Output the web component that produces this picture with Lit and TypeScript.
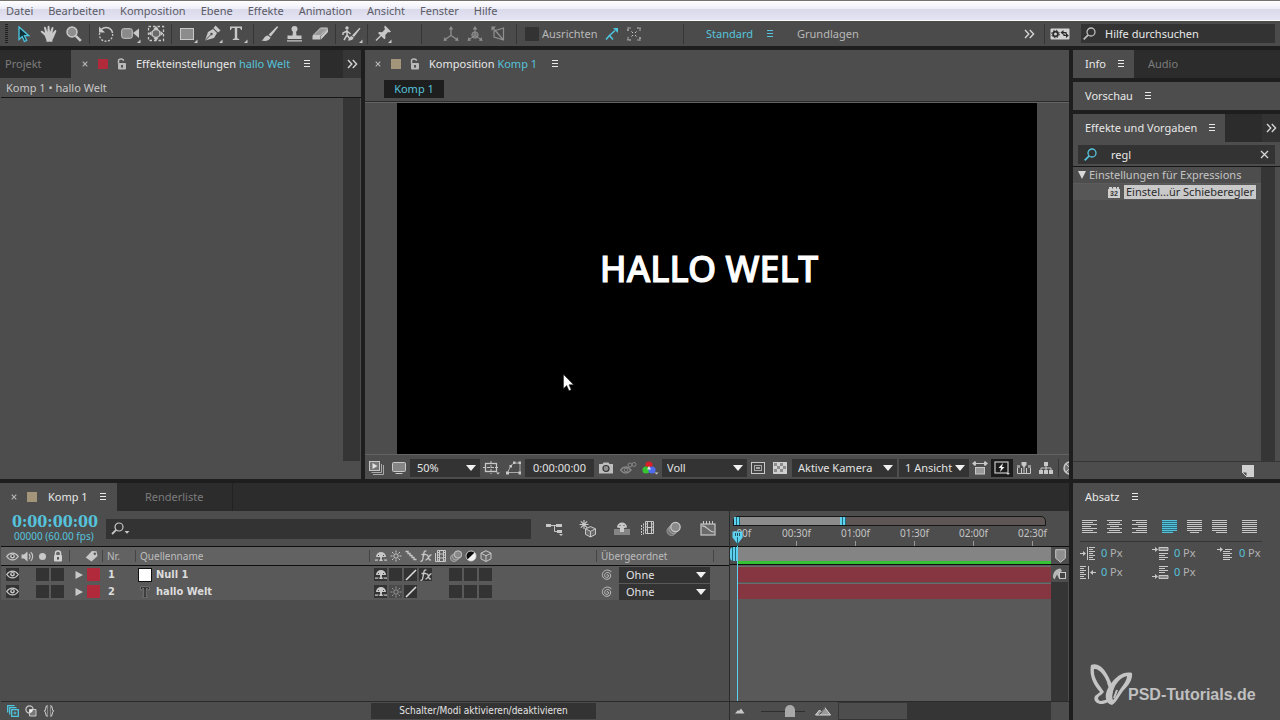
import { LitElement, html, svg, css, TemplateResult, SVGTemplateResult } from "lit";
import { customElement } from "lit/decorators.js";
import { classMap } from "lit/directives/class-map.js";

const G = "#c8c8c8";

const alignLines = (widths: number[], anchor: "l" | "c" | "r"): SVGTemplateResult =>
  svg`${widths.map((w, i) => {
    const x = anchor === "l" ? 0 : anchor === "r" ? 15 - w : (15 - w) / 2;
    return svg`<rect x=${x} y=${i * 2} width=${w} height="1" fill="currentColor"/>`;
  })}`;

const rag = [15, 11, 15, 9, 15, 11, 15];

const mushroom = svg`<path d="M1 6a5 5 0 0 1 10 0z" fill="${G}"/><path d="M5 6h2v4h-2zM0 8.500h12v1.200h-12z" fill="${G}"/><path d="M3 10l2-3M9 10l-2-3M3.500 5v-1M8.500 5v-1" stroke="#3a3a3a" stroke-width=".9" fill="none"/>`;
const film = svg`<path d="M2.500.500h8v11h-8z" fill="none" stroke="${G}"/><path d="M4.500.500v11M8.500.500v11M4.500 4h4M4.500 8h4M2 2.500h2M2 5h2M2 7.500h2M2 10h2M9 2.500h2M9 5h2M9 7.500h2M9 10h2" stroke="${G}" fill="none"/><path d="M.500 3v8.500h2" stroke="${G}" fill="none"/>`;
const blur = svg`<circle cx="4" cy="8" r="3.500" fill="#777" stroke="#aaa"/><circle cx="6" cy="6.500" r="3.500" fill="#777" stroke="#aaa"/><circle cx="8" cy="4.500" r="3.700" fill="#888" stroke="${G}"/>`;
const cube = svg`<path d="M6 .700l5 2.400v5.800l-5 2.600-5-2.600v-5.800zM1 3.200l5 2.500 5-2.500M6 5.700v5.800" fill="#6a6a6a" stroke="${G}" stroke-linejoin="round"/>`;
const sun = svg`<circle cx="6" cy="6" r="2.200" fill="none" stroke="currentColor"/><path d="M6 .500v2M6 9.500v2M.500 6h2M9.500 6h2M2 2l1.500 1.500M8.500 8.500l1.500 1.500M10 2l-1.500 1.500M3.500 8.500l-1.500 1.500" stroke="currentColor" fill="none"/>`;

const ICONS: Record<string, [number, number, SVGTemplateResult]> = {
  arrow: [14, 18, svg`<path d="M2 2v12.500l3.200-3 2.200 5 2.300-1-2.200-4.800h4.300z" fill="#12313a" stroke="#4fc6df" stroke-width="1.300"/>`],
  hand: [18, 18, svg`<path d="M4.600 10.500L1 7.300c-.9-1 .4-2.200 1.500-1.400l2.600 1.800L4 3c-.2-1.300 1.500-1.600 1.900-.5L7.400 7 7.600 1.700c0-1.300 1.800-1.300 1.900 0L10 7l1.600-4.300c.5-1.200 2.100-.7 1.800.6L12.400 8l2.200-2.500c.9-1 2.200 0 1.600 1.200-1 2-2.200 6-3.800 8.300v1.800H6.400V15z" fill="${G}"/>`],
  zoom: [18, 18, svg`<circle cx="7" cy="7" r="5" fill="#8e8e8e" stroke="${G}" stroke-width="1.500"/><path d="M10.800 10.800l5 5" stroke="${G}" stroke-width="2.600"/>`],
  rotate: [18, 18, svg`<path d="M4.500 4.200A6.600 6.600 0 0 1 15.500 8" fill="none" stroke="${G}" stroke-width="1.500"/><path d="M15.600 9A6.600 6.600 0 1 1 3 7" fill="none" stroke="${G}" stroke-width="1.300" stroke-dasharray="2 1.500"/><path d="M2 1.500v6h6z" fill="${G}"/>`],
  camera: [20, 18, svg`<rect x=".700" y="3.700" width="10.600" height="9.600" rx="2" fill="#8a8a8a" stroke="${G}"/><path d="M12 8l6-4.500v9.500z" fill="${G}"/><path d="M16 18h3.500v-3.500z" fill="${G}"/>`],
  anchor: [18, 18, svg`<rect x="1.500" y="1.500" width="15" height="14" fill="none" stroke="${G}" stroke-width="1.300" stroke-dasharray="2.500 2"/><circle cx="9" cy="8.500" r="4" fill="#6a6a6a" stroke="${G}" stroke-width="1.400"/><path d="M9 1l2.500 3h-5zM9 16l2.500-3h-5zM1.500 8.500l3-2.500v5zM16.500 8.500l-3-2.500v5z" fill="${G}"/>`],
  rect: [20, 18, svg`<rect x="2.500" y="3.500" width="13" height="11" fill="#8c8c8c" stroke="${G}"/><path d="M16 18h3.500v-3.500z" fill="${G}"/>`],
  pen: [20, 18, svg`<path d="M2 15.500L5 7l5-3 4 4-3 5z" fill="${G}"/><path d="M10.500 3l2-2.500 5 5L15 7.500z" fill="${G}"/><path d="M2 15.500l6-6" stroke="#4d4d4d" fill="none"/><circle cx="8.500" cy="9" r="1.200" fill="#4d4d4d"/><path d="M16 18h3.500v-3.500z" fill="${G}"/>`],
  type: [20, 18, svg`<path d="M2 1.500h12v3.500h-1c-.3-1.500-.8-2-2-2H9.200v9.500c0 1 .4 1.300 2 1.500v1H4.800v-1c1.600-.2 2-.5 2-1.500V3H5c-1.200 0-1.700.5-2 2H2z" fill="${G}"/><path d="M16 18h3.500v-3.500z" fill="${G}"/>`],
  brush: [18, 18, svg`<path d="M17.300 2L9.800 11.500 7.600 9.700 16 1.300z" fill="${G}"/><path d="M7 10.500l2.500 2c-.8 3-4.500 4-9 3 2.500-.8 2.500-4.600 6.500-5z" fill="${G}"/>`],
  stamp: [18, 18, svg`<circle cx="8.500" cy="4" r="3" fill="${G}"/><path d="M7 6h3l.500 4.500h5v3.500H1.500v-3.500h5zM1 15.200h15v1.300H1z" fill="${G}"/>`],
  eraser: [18, 18, svg`<path d="M2 10.500L9.500 3h7L9.500 10.500z" fill="#999" stroke="${G}"/><path d="M1.500 11H9.500v3.500h-8zM10 11l7-7.500V7l-7 7.500z" fill="${G}"/>`],
  roto: [22, 18, svg`<circle cx="6" cy="3" r="1.700" fill="${G}"/><path d="M6 5v5M6 6l-4 2v2M6 6l3.500 3M6 10l-3 5M6 10l3 4" stroke="${G}" stroke-width="1.500" fill="none"/><path d="M19.500 3.500L13 12l-2-1.600 7.500-7.600zM10.500 11l2.200 1.700c-.8 2.400-3 3.200-6.200 2.600 2-.8 2-3.700 4-4.300z" fill="${G}"/><path d="M18 18h3.500v-3.500z" fill="${G}"/>`],
  pin: [20, 18, svg`<path d="M11 .500l6 6-1.700 1-1.200-.4-2.800 2.900.200 3.200-1.200 1L4 8l1.200-1 3 .2L11 4.200l-.8-2.200z" fill="${G}"/><path d="M7 10.500L2 15.500" stroke="${G}" stroke-width="1.500"/><path d="M14 18h3.500v-3.500z" fill="${G}"/>`],
  axisLocal: [16, 16, svg`<path d="M8 2v7.500L2 13.500M8 9.500l6 4" stroke="#909090" stroke-width="1.300" fill="none"/><path d="M8 0l2.300 3.500H5.700zM.5 15l1-4 2.700 3.500zM15.500 15l-1-4-2.700 3.500z" fill="#909090"/>`],
  axisWorld: [16, 16, svg`<circle cx="8" cy="9" r="3.200" fill="#707070" stroke="#909090"/><path d="M8 2v7.500L2 13.500M8 9.500l6 4" stroke="#909090" fill="none"/><path d="M8 0l2.300 3.500H5.700zM.5 15l1-4 2.700 3.500zM15.500 15l-1-4-2.700 3.500z" fill="#909090"/>`],
  axisView: [16, 16, svg`<path d="M3 5l9.500-3v12L3 11zM2 2l10.500 12" stroke="#909090" stroke-width="1.200" fill="none"/><path d="M.5.500h4.500L.5 5z" fill="#909090"/>`],
  snap: [14, 14, svg`<path d="M1 12.500l3.500-4L8 12.500M4.500 8.500L10 3.500" stroke="#4fc6df" stroke-width="1.500" fill="none"/><path d="M8 1h5v5z" fill="#4fc6df"/>`],
  bounds: [14, 14, svg`<path d="M1 4V1h3M10 1h3v3M13 10v3h-3M4 13H1v-3" stroke="${G}" stroke-width="1.200" fill="none" stroke-dasharray="2 .600"/><path d="M4.500 4.500l1.500 1.500M9.500 4.500L8 6M4.500 9.500L6 8M9.500 9.500L8 8" stroke="${G}" fill="none"/>`],
  chevrons: [11, 10, svg`<path d="M1 1l3.800 4L1 9M5.800 1l3.800 4-3.800 4" stroke="#d4d4d4" stroke-width="1.400" fill="none"/>`],
  sync: [20, 12, svg`<rect x=".500" y=".500" width="19" height="11" rx="1" fill="#d2d2d2"/><circle cx="5.500" cy="6" r="2.400" fill="none" stroke="#2b2b2b" stroke-width="1.800"/><circle cx="5.500" cy="6" r="3.800" fill="none" stroke="#2b2b2b" stroke-width="1" stroke-dasharray="1.500 1.500"/><path d="M13 4.500h3v2M17 7.500h-3v-2" stroke="#2b2b2b" stroke-width="1.200" fill="none"/><path d="M13.500 2v5L10.500 4.500zM16 5v5l2.800-2.500z" fill="#2b2b2b"/>`],
  search: [13, 13, svg`<circle cx="8" cy="5" r="4" fill="none" stroke="currentColor" stroke-width="1.300"/><path d="M5.200 7.800L.700 12.300" stroke="currentColor" stroke-width="1.700"/>`],
  searchMenu: [19, 14, svg`<circle cx="8" cy="5" r="4" fill="none" stroke="${G}" stroke-width="1.200"/><path d="M5.200 7.800L1 12" stroke="${G}" stroke-width="1.800"/><path d="M13.500 9h5l-2.500 2.700z" fill="${G}"/>`],
  burger: [8, 8, svg`<path d="M1 .500h6M1 3.500h6M1 6.500h6" stroke="currentColor"/>`],
  close: [6, 6, svg`<path d="M.700.700l4.600 4.600M5.300.700L.700 5.300" stroke="#b8b8b8" stroke-width="1.100"/>`],
  clear: [9, 9, svg`<path d="M1 1l7 7M8 1L1 8" stroke="#d8d8d8" stroke-width="1.300"/>`],
  lock: [10, 12, svg`<path d="M1.500 5.500V2.800c0-2.500 5-2.500 5 0" fill="none" stroke="#b9b9b9" stroke-width="1.500"/><rect x="1" y="5" width="8" height="6.500" rx="1" fill="#b9b9b9"/><rect x="4.200" y="7" width="1.600" height="2.600" fill="#3a3a3a"/>`],
  lockClosed: [10, 12, svg`<path d="M2.500 6V3c0-2.800 5-2.800 5 0v3" fill="none" stroke="#d0d0d0" stroke-width="1.500"/><rect x="1" y="5" width="8" height="6.500" rx="1" fill="#d0d0d0"/><rect x="4.200" y="7" width="1.600" height="2.600" fill="#3a3a3a"/>`],
  preview: [16, 14, svg`<path d="M4 13.500h10.500V4M2.500 11.500h10V3" fill="none" stroke="#aaa"/><rect x=".500" y=".500" width="10" height="9" fill="#777" stroke="${G}"/><path d="M3.500 2v6l5-3z" fill="#e2e2e2"/>`],
  monitor: [16, 14, svg`<rect x="1.500" y="1.500" width="13" height="9" rx="1" fill="#858585" stroke="${G}"/><path d="M4.500 12.500h7" stroke="${G}"/>`],
  guides: [18, 14, svg`<rect x="2.500" y="2.500" width="11" height="8" fill="none" stroke="${G}" stroke-width="1.300"/><path d="M8 0v13M0 6.500h16" stroke="${G}" stroke-dasharray="3 1"/><path d="M13 11.500h4l-2 2z" fill="${G}"/>`],
  mask: [16, 14, svg`<path d="M1.500 11.500L5 4.500l3-2.500h6v9.500z" fill="none" stroke="#aaa"/><path d="M0 10.500h3v3H0zM3.500 4h2.500v2.500H3.500zM7 .500h2.500V3H7zM12.500.500H15V3h-2.500zM12.500 10.500H15v3h-2.500z" fill="${G}"/>`],
  snapshot: [16, 12, svg`<path d="M1 2h3.500l1-1.500h5l1 1.500H15v9.500H1z" fill="#bdbdbd"/><circle cx="8" cy="6.500" r="3" fill="#8f8f8f" stroke="#333" stroke-width="1.200"/>`],
  showSnap: [17, 14, svg`<path d="M.5 9c3-4 7.500-4 10.500 0-3 4-7.500 4-10.500 0z" fill="none" stroke="#888" stroke-width="1.400"/><circle cx="6" cy="9" r="1.800" fill="none" stroke="#888"/><circle cx="10" cy="4" r="2" fill="none" stroke="#888"/><circle cx="14" cy="3.500" r="2" fill="none" stroke="#888"/>`],
  rgb: [17, 14, svg`<circle cx="7" cy="4" r="3.600" fill="#d8202a"/><circle cx="4" cy="9" r="3.600" fill="#36c531"/><circle cx="10" cy="9" r="3.600" fill="#4f6cf0"/><path d="M7 5l2 3.500H5z" fill="#e8e8e8"/><path d="M12.500 11.500h4l-2 2z" fill="${G}"/>`],
  roi: [14, 12, svg`<rect x=".500" y=".500" width="13" height="11" fill="#454545" stroke="${G}"/><rect x="3.500" y="3.500" width="7" height="5" fill="none" stroke="#a8a8a8"/><rect x="5" y="5" width="4" height="2" fill="#a8a8a8"/>`],
  checker: [14, 12, svg`<rect width="14" height="12" fill="#d0d0d0"/><path d="M1 1h3v3H1zM7 1h3v3H7zM4 4h3v3H4zM10 4h3v3h-3zM1 7h3v3H1zM7 7h3v3H7z" fill="#8c8c8c"/>`],
  aspect: [16, 14, svg`<path d="M2 2.500h12M3.500.500v4M12.500.500v4" stroke="${G}"/><path d="M0 2.500L3 0v5zM16 2.500L13 0v5z" fill="${G}"/><rect x="3.500" y="6.500" width="9" height="6.500" fill="#999" stroke="${G}"/>`],
  fast: [16, 14, svg`<rect x="1" y="1" width="13" height="11" fill="none" stroke="${G}" stroke-width="1.200"/><path d="M9 2L4.500 7H7L6 11l4.500-5H8z" fill="#f0f0f0"/><path d="M12 12h4l-2 2z" fill="${G}"/>`],
  tline: [16, 14, svg`<path d="M1.500 4v8.500h13V4M5.500 7v5M10.500 7v5M8 4v8.500" fill="none" stroke="${G}"/><path d="M5.500 1h5v3L8 6.500 5.500 4z" fill="${G}"/><path d="M1 4h3v3H1zM12 4h3v3h-3z" fill="#999"/>`],
  flow: [14, 12, svg`<path d="M5 0h4v4H5zM0 8h4v4H0zM5 8h4v4H5zM10 8h4v4h-4z" fill="${G}"/><path d="M7 4v4M2 8V6h10v2" stroke="${G}" fill="none"/>`],
  globe: [14, 14, svg`<circle cx="7" cy="7" r="6" fill="#777" stroke="${G}" stroke-width="1.500"/><path d="M7 7L3 3M7 7h6M7 7l-4 4" stroke="${G}"/>`],
  eye: [13, 9, svg`<path d="M.700 4.500c3-4.500 8.600-4.500 11.600 0-3 4.500-8.600 4.500-11.600 0z" fill="none" stroke="${G}" stroke-width="1.200"/><circle cx="6.500" cy="4.300" r="2.300" fill="${G}"/><circle cx="6.500" cy="4" r="1" fill="#333"/>`],
  speaker: [13, 11, svg`<path d="M.5 3.500h2.500l3.500-3v10L3 7.500H.500z" fill="${G}"/><path d="M8 3c1.300 1.200 1.300 3.800 0 5M9.800 1.300c2.400 2 2.400 6.400 0 8.400" stroke="${G}" fill="none" stroke-width="1.200"/>`],
  solo: [13, 9, svg`<circle cx="6.500" cy="4.500" r="3.500" fill="${G}"/>`],
  tag: [13, 12, svg`<path d="M.700 7.500L7 1l4.500.200L12.500 6 6.500 11.500z" fill="${G}"/><circle cx="9.800" cy="3.700" r="1.200" fill="#555"/>`],
  twirl: [8, 10, svg`<path d="M.5 1v8L8 5z" fill="${G}"/>`],
  mushroom: [12, 11, mushroom],
  sun: [12, 12, sun],
  quality: [12, 12, svg`<path d="M.5 1.500h2.500v2h2v2h2v2h2v2h2.500" stroke="${G}" stroke-width="1.300" fill="none"/>`],
  slash: [12, 12, svg`<path d="M1 11L11 1" stroke="#dcdcdc" stroke-width="1.600"/>`],
  fx: [12, 12, svg`<path d="M6.500 1.200C4.800.300 4.200 1.500 3.900 3L2.700 9.500c-.3 1.500-1 2-2.200 1.600M1.500 4.500h4.500M6 5c1.500-.600 2 .500 2.500 2.500s1 3 2.500 2.200M11.500 4.700C9 5 8 10 5.500 10" stroke="${G}" stroke-width="1.300" fill="none"/>`],
  film: [12, 12, film],
  blur: [12, 12, blur],
  adjust: [12, 12, svg`<circle cx="6" cy="6" r="5" fill="#f2f2f2"/><path d="M2.400 9.600A5 5 0 0 1 9.600 2.400z" fill="#0c0c0c"/><circle cx="6" cy="6" r="5" fill="none" stroke="#ddd" stroke-width=".800"/>`],
  cube: [12, 12, cube],
  whip: [12, 12, svg`<path d="M6 6.500c-.5-.9.800-1.500 1.400-.4.700 1.800-1.300 3-2.900 2C2.800 6.800 3.800 3.700 6.300 3.500 9.300 3.300 10.500 6.500 9 8.800 6.800 11.600 2 10.300 1.400 6.600 1 3.300 3.600 1 6.600 1.100c1.700.1 3.100.9 3.900 2" fill="none" stroke="#c4c4c4"/>`],
  textLayer: [12, 12, svg`<path d="M1.500 1h9v3h-1c-.2-1-.5-1.500-1.500-1.500H7V10l1.500.500v.700h-5v-.700L5 10V2.500H4C3 2.500 2.700 3 2.500 4h-1z" fill="#1f1f1f" stroke="#a0a0a0" stroke-width=".500"/>`],
  miniFlow: [17, 14, svg`<path d="M0 2h5v3H0zM10 2h6v3h-6zM11 8h5v3h-5z" fill="${G}"/><path d="M5 3.500h5M8.500 3.500v6h3" stroke="${G}" fill="none"/><path d="M13 12h4l-2 2z" fill="${G}"/>`],
  draft3d: [18, 18, svg`<path d="M5 0v9M.5 4.500h9M1.800 1.300l6.400 6.400M8.200 1.300L1.800 7.700" stroke="${G}" stroke-width="1.200"/><path d="M11.500 6.500l5 2.300v5.600l-5 2.600-5-2.600V8.800zM6.500 8.800l5 2.500 5-2.500M11.500 11.300V17" fill="#6a6a6a" stroke="${G}"/>`],
  shy: [16, 15, svg`<path d="M0 8h16v6H0z" fill="#858585"/><path d="M3 6.500a5 5 0 0 1 10 0l-3 .500v4H6V7z" fill="${G}"/><path d="M6 5v-1M10 5v-1" stroke="#444"/>`],
  frames: [16, 16, svg`<path d="M5.500.500h8v12h-8z" fill="none" stroke="${G}"/><path d="M7.500.500v12M11.500.500v12M7.500 6.500h4M5 3h2M5 6h2M5 9h2M12 3h2M12 6h2M12 9h2" stroke="${G}"/><path d="M1.500 4v10M3.500 2.500v11.500" stroke="${G}" stroke-dasharray="2 1"/>`],
  motion: [16, 16, svg`<circle cx="5.500" cy="10" r="4.500" fill="#707070" stroke="#999"/><circle cx="7.500" cy="8" r="4.500" fill="#777" stroke="#aaa"/><circle cx="9.500" cy="6" r="4.700" fill="#8a8a8a" stroke="${G}" stroke-width="1.200"/>`],
  graph: [16, 15, svg`<rect x="1" y="3" width="14" height="11" fill="#6a6a6a" stroke="${G}" stroke-width="1.200"/><path d="M2 5c5-1 6 6 12 6" stroke="${G}" fill="none" stroke-width="1.200"/><path d="M3.500 0v3M6.500 0v3M9.500 0v3M12.500 0v3" stroke="${G}"/>`],
  toggleA: [12, 12, svg`<path d="M.700 7.500V.700h6.800M2.700 9.500V2.700h6.800M4.700 4.700h6.600v6.600H4.700z" fill="none" stroke="#4fc6df" stroke-width="1.300"/><path d="M6.500 8h3M8 6.500v3" stroke="#4fc6df"/>`],
  toggleB: [12, 12, svg`<circle cx="4.500" cy="4.500" r="3.600" fill="none" stroke="${G}" stroke-width="1.200"/><path d="M4.500 4.500h6.500v6.500H4.500z" fill="#777" stroke="${G}"/><path d="M4.500 4.500h3.500a4 4 0 0 1-3.500 3.500z" fill="#eee"/>`],
  toggleC: [12, 12, svg`<path d="M4.500.700c-3 0-.5 5-3.500 5.300 3 .3.500 5.300 3.500 5.300zM7.500.700c3 0 .5 5 3.500 5.300-3 .3-.500 5.300-3.500 5.300z" fill="none" stroke="${G}" stroke-width="1.100"/><path d="M4.500.500v11M7.500.500v11" stroke="#888"/>`],
  hillSmall: [10, 6, svg`<path d="M0 5.500L3 2l1 1 2-2.500 3.500 5z" fill="${G}"/>`],
  hillLarge: [16, 9, svg`<path d="M.500 8l4-5 2 2L10 .800 15.500 8z" fill="#999" stroke="#d8d8d8"/><path d="M4.500 7.500L10 1" stroke="#444"/>`],
  marker: [11, 14, svg`<path d="M.700.700h9.600v8.500L5.500 13.300.700 9.200z" fill="#8e8e8e" stroke="#c4c4c4"/>`],
  comp: [14, 12, svg`<path d="M0 9.500C0 4 3 .500 7.500.500L9 3 6.500 4.500 6 10.500l-2-4-2.500 5z" fill="#b8b8b8"/><rect x="6.500" y="4.500" width="6" height="6" fill="#444" stroke="${G}"/>`],
  preset: [12, 12, svg`<path d="M1 3V1h3v1.500h1V1h3v1.500h1V1h2v2h1v9H0V3z" fill="#cfcfcf"/><text x="6" y="10" font-size="7" font-weight="700" font-family="Liberation Sans, sans-serif" text-anchor="middle" fill="#333">32</text>`],
  newBin: [12, 12, svg`<path d="M0 0h12v12H5L0 7z" fill="#cfcfcf"/><path d="M0 7h5v5z" fill="#4d4d4d" stroke="#cfcfcf"/>`],
  triDown: [9, 8, svg`<path d="M0 0h8L4 8z" fill="#d8d8d8"/>`],
  drop: [10, 6, svg`<path d="M0 0h10L5 6z" fill="#f0f0f0"/>`],
  alL: [15, 13, alignLines(rag, "l")],
  alC: [15, 13, alignLines(rag, "c")],
  alR: [15, 13, alignLines(rag, "r")],
  juL: [15, 13, svg`<path d="M0 0h15v11h-4v2H0z" fill="#2c6f80"/>${["0", "2", "4", "6", "8", "10"].map((y) => svg`<rect y=${y} width="15" height="1" fill="#56c3dc"/>`)}<rect y="12" width="11" height="1" fill="#56c3dc"/>`],
  juC: [15, 13, alignLines([15, 15, 15, 15, 15, 15, 9], "c")],
  juR: [15, 13, alignLines([15, 15, 15, 15, 15, 15, 11], "r")],
  juA: [15, 13, alignLines([15, 15, 15, 15, 15, 15, 15], "l")],
  indL: [16, 13, svg`<path d="M0 6.500h4M7.500 0v13" stroke="${G}"/><path d="M3 4l3 2.500L3 9z" fill="${G}"/><path d="M9 .500h6M9 2.500h4M9 4.500h6M9 6.500h4M9 8.500h6M9 10.500h4M9 12.500h6" stroke="${G}"/>`],
  indR: [16, 13, svg`<path d="M16 6.500h-4M8.500 0v13" stroke="${G}"/><path d="M13 4l-3 2.500L13 9z" fill="${G}"/><path d="M0 .500h6M0 2.500h4M0 4.500h6M0 6.500h4M0 8.500h6M0 10.500h4M0 12.500h6" stroke="${G}"/>`],
  spB: [17, 13, svg`<path d="M0 2.500h4" stroke="${G}"/><path d="M3 0l3 2.500L3 5z" fill="${G}"/><path d="M7 .500h9v3H7z" fill="#8a8a8a" stroke="${G}"/><path d="M7 6.500h9M7 8.500h6M7 10.500h9M7 12.500h6" stroke="${G}"/>`],
  spA: [17, 13, svg`<path d="M0 10.500h4" stroke="${G}"/><path d="M3 8l3 2.500L3 13z" fill="${G}"/><path d="M7 9.500h9v3H7z" fill="#8a8a8a" stroke="${G}"/><path d="M7 .500h9M7 2.500h6M7 4.500h9M7 6.500h6" stroke="${G}"/>`],
  indF: [17, 13, svg`<path d="M0 2.500h4" stroke="${G}"/><path d="M3 0l3 2.500L3 5z" fill="${G}"/><path d="M8 2.500h7M6 4.500h7M6 6.500h9M6 8.500h7M6 10.500h9M6 12.500h7" stroke="${G}"/>`],
  head: [11, 15, svg`<path d="M.500.500h10v6L5.500 13 .500 6.500z" fill="#5fd0ee"/><path d="M3.500 2v3M5.500 2v3M7.500 2v3" stroke="#1d5a6c"/><path d="M5.500 6v9" stroke="#1b6b7c"/>`],
  pointer: [13, 19, svg`<path d="M1.500 1.500v14l3.200-3 2.300 5.200 2.200-1L7 11.700h4.500z" fill="#fff" stroke="#222" stroke-width=".500"/>`],
  wings: [48, 42, svg`<path d="M3 2C12-2 20 10 24 22l-3 3C18 13 11 5 6 6 5 16 12 22 16 29l-3 3c-4 2-4 5 0 6l8-2-1 3C12 44 4 39 7 33l5-4C5 21 1 12 3 2z" fill="#c4c4c4"/><path fill-rule="evenodd" d="M24 42c-8-2-8-12-2-20 6-9 14-14 22-12 1 7-4 13-9 18-4 5-6 11-11 14zM25 37c3-3 5-8 8-12 3-4 6-8 6-12-6 1-12 8-14 15-1 4-1 7 0 9z" fill="#c4c4c4"/><path d="M20 20l3 6M26 22c-2 5-4 10-3 16M29 27l-3 8" stroke="#c4c4c4" stroke-width="2" fill="none"/>`],
};

const icon = (name: string): TemplateResult => {
  const [w, h, body] = ICONS[name];
  return html`<svg aria-hidden="true" width=${w} height=${h} viewBox="0 0 ${w} ${h}">${body}</svg>`;
};

const base = css`
  :host { display: block; min-width: 0; min-height: 0; }
  * { box-sizing: border-box; }
  svg { display: block; flex: none; }
  button, input, select {
    font: inherit; color: inherit; background: none; border: 0; border-radius: 0;
    margin: 0; padding: 0; appearance: none; outline: none; min-width: 0;
  }
  a { color: inherit; text-decoration: none; }
  .panel { background: #4d4d4d; display: flex; flex-direction: column; height: 100%; min-width: 0; overflow: hidden; }
  .tabs { display: flex; height: 28px; flex: none; align-items: stretch; background: #2c2c2c; white-space: nowrap; }
  .tab { display: flex; align-items: center; padding: 0 12px; color: #e8e8e8; background: #4d4d4d; }
  .tab.idle { background: none; color: #7c7c7c; }
  .tab button { display: grid; place-items: center; }
  .cyan { color: #56c3dc; }
  .combo { display: grid; align-items: center; background: #333; color: #e2e2e2; }
  .combo select { grid-area: 1 / 1; width: 100%; height: 100%; padding: 0 7px; }
  .combo svg { grid-area: 1 / 1; justify-self: end; margin-right: 4px; pointer-events: none; }
  .iconbtn { display: grid; place-items: center; flex: none; width: 22px; height: 18px; }
`;

@customElement("ae-menubar")
class MenuBar extends LitElement {
  static styles = [base, css`
    nav {
      display: flex; gap: 15px; align-items: center; height: 21px; padding: 1px 6px 0;
      border-top: 1px solid #74726e; border-bottom: 1px solid #fafafa; color: #5c5c66;
      background: linear-gradient(#ffffff, #eeeef8 40%, #dadaeb 45%, #e4e4f4);
    }
  `];
  items = ["Datei", "Bearbeiten", "Komposition", "Ebene", "Effekte", "Animation", "Ansicht", "Fenster", "Hilfe"];
  render() {
    return html`<nav>${this.items.map((t) => html`<a href="#">${t}</a>`)}</nav>`;
  }
}

@customElement("ae-toolbar")
class ToolBar extends LitElement {
  static styles = [base, css`
    .bar { display: flex; align-items: center; height: 25px; background: #4b4b4b; color: #b8b8b8; white-space: nowrap; }
    .grip { width: 3px; height: 19px; margin: 0 0 0 5px; background: repeating-linear-gradient(#1f1f1f 0 1px, #4b4b4b 1px 2px); }
    .group { display: flex; padding: 0 3px; height: 20px; align-items: center; border-right: 1px solid #363636; }
    .group button { width: 25px; height: 20px; display: grid; place-items: center; }
    .group.pin { width: 54px; }
    .group.axes { padding: 0 5px 0 17px; }
    .group.axes button { width: 24px; height: 23px; }
    .group.snap { flex: 0 1 167px; padding: 0 0 0 8px; gap: 3px; }
    .snap input { width: 14px; height: 14px; background: #333; }
    .group.snap button { width: 15px; margin-left: 4px; }
    .spaces { display: flex; align-items: center; flex: 1; padding-left: 22px; height: 20px; border-right: 1px solid #363636; }
    .spaces .menu { margin: 0 23px 0 13px; }
    .spaces .more { margin: 0 9px 0 auto; }
    .sync { margin: 0 11px 0 5px; }
    .help { display: flex; align-items: center; gap: 9px; background: #333; color: #e8e8e8; width: 194px; height: 19px; margin-right: 5px; padding-left: 2px; }
    .help svg { color: #bdbdbd; }
    .help input { flex: 1; }
    .help input::placeholder { color: #e8e8e8; opacity: 1; }
  `];
  groups: string[][] = [["arrow", "hand", "zoom"], ["rotate", "camera", "anchor"], ["rect", "pen", "type"], ["brush", "stamp", "eraser"], ["roto"]];
  render() {
    const btn = (n: string) => html`<button aria-label=${n}>${icon(n)}</button>`;
    return html`<div class="bar">
      <div class="grip"></div>
      ${this.groups.map((g) => html`<div class="group">${g.map(btn)}</div>`)}
      <div class="group pin">${btn("pin")}</div>
      <div class="group axes">${["axisLocal", "axisWorld", "axisView"].map(btn)}</div>
      <div class="group snap">
        <input id="snap" type="checkbox"><label for="snap">Ausrichten</label>
        ${btn("snap")}${btn("bounds")}
      </div>
      <div class="spaces">
        <button class="cyan">Standard</button>
        <button class="menu cyan" aria-label="Menü">${icon("burger")}</button>
        <button>Grundlagen</button>
        <button class="more" aria-label="Mehr">${icon("chevrons")}</button>
      </div>
      <button class="sync" aria-label="Sync">${icon("sync")}</button>
      <label class="help">${icon("search")}<input type="text" placeholder="Hilfe durchsuchen" aria-label="Hilfe durchsuchen"></label>
    </div>`;
  }
}

@customElement("ae-effect-controls")
class EffectControls extends LitElement {
  static styles = [base, css`
    .project { width: 71px; padding: 0 5px; background: #303030; }
    .active { padding: 0 9px 0 11px; }
    .swatch { width: 10px; height: 10px; margin: 0 9px 0 10px; background: #b02a3c; }
    .name { margin: 0 13px 0 9px; }
    .more { margin-left: auto; width: 18px; display: grid; place-items: center; background: #363636; }
    .path { height: 20px; flex: none; padding: 2px 5px 0; color: #c8c8c8; border-bottom: 1px solid #161616; margin-left: 1px; line-height: 16px; }
    .body { flex: 1; display: flex; justify-content: flex-end; padding-bottom: 18px; }
    .scroll { width: 17px; background: #353535; margin-right: 1px; }
  `];
  render() {
    return html`<section class="panel">
      <div class="tabs">
        <button class="tab idle project">Projekt</button>
        <div class="tab active">
          <button aria-label="Schließen">${icon("close")}</button><span class="swatch"></span>${icon("lock")}
          <span class="name">Effekteinstellungen <span class="cyan">hallo Welt</span></span>
          <button aria-label="Menü">${icon("burger")}</button>
        </div>
        <button class="more" aria-label="Mehr">${icon("chevrons")}</button>
      </div>
      <div class="path">Komp 1 • hallo Welt</div>
      <div class="body"><div class="scroll"></div></div>
    </section>`;
  }
}

@customElement("ae-viewer")
class Viewer extends LitElement {
  static styles = [base, css`
    .tabs { background: none; }
    .tab { padding: 0 10px; }
    .swatch { width: 10px; height: 10px; margin: 0 9px 0 10px; background: #a3957a; }
    .name { margin: 0 14px 0 9px; }
    .crumbs { height: 24px; flex: none; padding: 2px 19px 0; border-bottom: 1px solid #2b2b2b; }
    .crumbs button { background: #1e1e1e; height: 18px; width: 60px; }
    .stage { flex: 1; min-height: 0; border-top: 1px solid #636363; border-bottom: 1px solid #636363; padding: 0 32px; position: relative; }
    .canvas { background: #000; height: 100%; display: grid; place-items: center; color: #fff; font: 500 36px/54px "Noto Sans", sans-serif; -webkit-text-stroke: 1px #fff; padding: 0 16px 20px 0; }
    .pointer { position: absolute; left: 28%; top: 77%; }
    .foot { display: flex; align-items: center; height: 24px; flex: none; padding: 1px 0 0 1px; white-space: nowrap; }
    .combo { height: 18px; flex: none; }
    .mag { width: 70px; margin-right: 1px; }
    .time { width: 69px; flex: none; height: 18px; background: #333; color: #e2e2e2; margin-right: 1px; }
    .res { width: 85px; margin-left: 1px; }
    .cam { width: 105px; margin: 0 2px 0 1px; }
    .view { width: 70px; }
    .res select { padding: 0 5px; }
    .cam select, .view select { padding: 0 6px; }
    .on { background: #1b1b1b; }
    .last { border-left: 1px solid #363636; margin-left: 1px; }
  `];
  render() {
    const b = (n: string, cls = "") => html`<button class="iconbtn ${cls}" aria-label=${n}>${icon(n)}</button>`;
    const combo = (cls: string, v: string, label: string) =>
      html`<span class="combo ${cls}"><select aria-label=${label}><option>${v}</option></select>${icon("drop")}</span>`;
    return html`<section class="panel">
      <div class="tabs"><div class="tab">
        <button aria-label="Schließen">${icon("close")}</button><span class="swatch"></span>${icon("lock")}
        <span class="name">Komposition <span class="cyan">Komp 1</span></span>
        <button aria-label="Menü">${icon("burger")}</button>
      </div></div>
      <div class="crumbs"><button class="cyan">Komp 1</button></div>
      <div class="stage"><div class="canvas">HALLO WELT</div><div class="pointer">${icon("pointer")}</div></div>
      <div class="foot">
        ${b("preview")}${b("monitor")}${combo("mag", "50%", "Zoom")}
        ${b("guides")}${b("mask")}<button class="time">0:00:00:00</button>
        ${b("snapshot")}${b("showSnap")}${b("rgb")}${combo("res", "Voll", "Auflösung")}
        ${b("roi")}${b("checker")}${combo("cam", "Aktive Kamera", "Kamera")}${combo("view", "1 Ansicht", "Ansicht")}
        ${b("aspect")}${b("fast", "on")}${b("tline")}${b("flow")}${b("globe", "last")}
      </div>
    </section>`;
  }
}

@customElement("ae-side")
class Side extends LitElement {
  static styles = [base, css`
    .stack { display: flex; flex-direction: column; gap: 4px; height: 100%; }
    .panel { flex: none; height: auto; }
    .grow { flex: 1; }
    .tab { gap: 11px; padding: 0 9px 0 12px; }
    .idle { padding-left: 14px; }
    .more { margin-left: auto; width: 18px; display: grid; place-items: center; background: #323232; }
    .search { display: flex; align-items: center; flex: none; height: 19px; margin: 3px 5px 2px 5px; padding: 0 6px; background: #333; color: #e8e8e8; }
    .search input { flex: 1; padding-left: 14px; }
    .search > svg { color: #56c3dc; }
    .body { flex: 1; display: flex; border-top: 1px solid #161616; }
    .list { flex: 1; color: #c4c4c4; white-space: nowrap; min-width: 0; }
    .cat { display: flex; align-items: center; gap: 2px; height: 17px; padding-left: 5px; border-bottom: 1px solid #5c5c5c; }
    .item { display: flex; align-items: center; gap: 4px; height: 16px; padding-left: 35px; background: #575757; }
    .item span { background: #c9c9c9; color: #2c2c2c; line-height: 14px; padding: 0 2px; }
    .scroll { width: 14px; background: #353535; margin-right: 5px; }
    .foot { height: 18px; flex: none; border-top: 1px solid #363636; display: flex; align-items: center; justify-content: flex-end; padding-right: 26px; }
  `];
  render() {
    const burger = html`<button aria-label="Menü">${icon("burger")}</button>`;
    return html`<div class="stack">
      <section class="panel"><div class="tabs"><div class="tab">Info ${burger}</div><button class="tab idle">Audio</button></div></section>
      <section class="panel"><div class="tab tabs">Vorschau ${burger}</div></section>
      <section class="panel grow">
        <div class="tabs"><div class="tab">Effekte und Vorgaben ${burger}</div><button class="more" aria-label="Mehr">${icon("chevrons")}</button></div>
        <label class="search">${icon("search")}<input type="text" aria-label="Suchen" .value=${"regl"}><button aria-label="Löschen">${icon("clear")}</button></label>
        <div class="body">
          <div class="list">
            <div class="cat">${icon("triDown")}Einstellungen für Expressions</div>
            <div class="item">${icon("preset")}<span>Einstel...ür Schieberegler</span></div>
          </div>
          <div class="scroll"></div>
        </div>
        <div class="foot">${icon("newBin")}</div>
      </section>
    </div>`;
  }
}

@customElement("ae-paragraph")
class Paragraph extends LitElement {
  static styles = [base, css`
    .tab { gap: 12px; }
    .align { display: flex; flex: none; padding: 0 4px; height: 30px; align-items: center; color: #c8c8c8; }
    .align button { width: 25px; height: 20px; display: grid; place-items: center; }
    .align .gap { margin-left: 5px; }
    .fields { display: grid; grid-template-columns: 72px 65px auto; row-gap: 5px; justify-content: start; margin: 0 18px 0 7px; padding-top: 4px; border-top: 1px solid #363636; color: #b4b4b4; }
    .fields label { display: flex; align-items: center; height: 14px; gap: 2px; white-space: nowrap; }
    .fields input { width: 7px; margin-left: 3px; color: #56c3dc; }
    .brand { margin: auto 0 15px 15px; display: flex; align-items: flex-end; color: #c0c0c0; font: 700 16px/20px "Liberation Sans", sans-serif; white-space: nowrap; }
    .brand svg { margin-right: -8px; }
  `];
  render() {
    const al: [string, string][] = [["alL", ""], ["alC", ""], ["alR", ""], ["juL", "gap"], ["juC", ""], ["juR", ""], ["juA", "gap"]];
    return html`<section class="panel">
      <div class="tab tabs">Absatz <button aria-label="Menü">${icon("burger")}</button></div>
      <div class="align">${al.map(([n, c]) => html`<button class=${c} aria-label=${n}>${icon(n)}</button>`)}</div>
      <div class="fields">
        ${["indL", "spB", "indF", "indR", "spA"].map((n) => html`<label>${icon(n)}<input type="text" .value=${"0"} aria-label=${n}>Px</label>`)}
      </div>
      <div class="brand">${icon("wings")}<span>PSD-Tutorials.de</span></div>
    </section>`;
  }
}

@customElement("ae-timeline")
class Timeline extends LitElement {
  static styles = [base, css`
    .panel { padding-left: 1px; }
    .tab { padding: 0 10px; }
    .swatch { width: 10px; height: 10px; margin: 0 11px 0 10px; background: #a3957a; }
    .menu { margin-left: 11px; }
    .idle { width: 116px; justify-content: center; border-right: 1px solid #222; }
    .main { flex: 1; min-height: 0; display: grid; grid-template-columns: minmax(0, 728fr) minmax(0, 340fr); }
    .left, .right { display: flex; flex-direction: column; min-width: 0; }
    .top { height: 36px; flex: none; display: flex; align-items: center; border-bottom: 1px solid #0f0f0f; }
    .clock { width: 105px; padding-left: 11px; display: grid; text-align: left; color: #56c3dc; }
    .clock b { font: 700 16px/16px "DejaVu Serif Condensed", "DejaVu Serif", serif; }
    .clock small { font-size: 10px; line-height: 13px; padding-left: 2px; }
    .find { display: flex; align-items: center; flex: 1; background: #333; height: 20px; padding-left: 5px; margin-right: 6px; }
    .find input { flex: 1; }
    .tools { display: flex; flex: none; }
    .tools button { width: 26px; height: 22px; display: grid; place-items: center; }
    .tools .mid { width: 34px; }
    .tools .wide { width: 42px; }
    .tools .gap { margin-left: 4px; }
    .cols { display: grid; grid-template-columns: 68px 33px 33px minmax(0, 1fr) 227px 117px 16px; align-items: center; flex: none; white-space: nowrap; }
    .head { height: 19px; background: #626262; color: #bcbcbc; font-size: 10px; border-bottom: 1px solid #0f0f0f; }
    .head > div { height: 12px; border-left: 1px solid #444; }
    .head > div:first-child { border: 0; }
    .row { height: 17px; background: #595959; color: #dcdcdc; font-weight: 700; font-family: "DejaVu Sans Condensed", sans-serif; }
    .cols > div { display: flex; align-items: center; gap: 2px; }
    .cells { padding-left: 5px; }
    .switches { padding-left: 5px; }
    .head .switches { padding-left: 4px; }
    .cell { width: 13px; height: 13px; flex: none; display: grid; place-items: center; color: #c8c8c8; }
    .cell.dark { background: #333; }
    .cell.dim { background: #4a4a4a; color: #999; }
    .tagcol { padding-left: 6px; }
    .cols .tagcol { gap: 4px; }
    .head .tagcol { padding-left: 15px; }
    .red { width: 13px; height: 13px; background: #b02a3c; }
    .num { padding-left: 6px; }
    .head .num { padding-left: 4px; }
    .src { padding-left: 3px; }
    .head .src, .head .parent { padding-left: 4px; }
    .cols > .src.item { gap: 4px; }
    .white { width: 14px; height: 14px; background: #fff; border: 1px solid #111; }
    .glyph { width: 14px; display: grid; place-items: center; }
    .cols > .parent.item { gap: 6px; padding-left: 5px; }
    .row .combo { width: 91px; height: 16px; font-weight: 400; font-family: "Noto Sans", sans-serif; }
    .space { flex: 1; }
    .foot { height: 19px; flex: none; display: flex; align-items: center; border-top: 1px solid #2b2b2b; }
    .left .foot { padding-left: 6px; gap: 6px; }
    .toggle { background: #333; color: #e4e4e4; height: 16px; width: 225px; margin: 0 133px 0 auto; font-size: 10px; font-family: "DejaVu Sans Condensed", sans-serif; }
    .right { border-left: 1px solid #2b2b2b; position: relative; }
    .nav { display: flex; height: 10px; flex: none; margin: 5px 23px 0 3px; border: 1px solid #171717; background: #5e5654; border-radius: 5px 5px 0 0; }
    .range { background: #8c8c8c; width: 36%; display: flex; justify-content: space-between; }
    .knob { width: 6px; background: repeating-linear-gradient(90deg, #5fd0ee 0 2px, #1b6b7c 2px 3px); }
    .ruler { height: 20px; flex: none; margin-right: 17px; overflow: hidden; font-size: 10px; line-height: 15px; color: #c4c4c4; }
    .marks { display: flex; margin-left: -22px; }
    .mark { flex: 0 0 59px; text-align: center; display: grid; justify-items: center; }
    .mark:first-child { padding-left: 10px; }
    .mark i { width: 1px; height: 5px; background: #999; }
    .mark:first-child i { background: none; }
    .work { display: flex; height: 19px; flex: none; background: #4d4d4d; border-top: 1px solid #0f0f0f; border-bottom: 1px solid #0f0f0f; }
    .work .start { width: 7px; background: repeating-linear-gradient(90deg, #5fd0ee 0 2px, #1b6b7c 2px 3px); border-radius: 4px 0 0 4px; margin-bottom: 3px; }
    .area { flex: 1; background: #848484; border-bottom: 3px solid #35c235; }
    .work .end { width: 18px; display: grid; place-items: center; }
    .tracks { flex: 1; display: flex; }
    .lanes { flex: 1; background: #595959; padding-left: 7px; }
    .bar { height: 16px; margin-top: 1px; background: #863640; border-top: 1px solid #6b6b6b; }
    .side { width: 18px; background: #353535; border-right: 1px solid #4d4d4d; }
    .side div { background: #4d4d4d; height: 17px; padding: 3px 0 0 2px; }
    .line { position: absolute; left: 7px; top: 34px; bottom: 19px; width: 1px; background: #5fd0ee; }
    .playhead { position: absolute; left: 2px; top: 20px; }
    .slider { width: 44px; height: 16px; margin: 0 10px 0 16px; background: linear-gradient(#2e2e2e, #2e2e2e) center / 100% 1px no-repeat; }
    .slider::-webkit-slider-thumb { appearance: none; width: 10px; height: 12px; background: #a8a8a8; border-radius: 5px 5px 0 0; }
    .right .foot { padding-left: 5px; }
    .hscroll { flex: 1; height: 100%; margin-left: 7px; margin-right: 18px; background: #353535; }
    .hscroll div { height: 100%; width: 33%; background: #4d4d4d; border: 1px solid #363636; }
  `];
  layers = [
    { n: 1, name: "Null 1", sw: ["mushroom", "", "slash", "fx"], text: false },
    { n: 2, name: "hallo Welt", sw: ["mushroom", "sun", "slash", null], text: true },
  ];
  render() {
    const cell = (n: string | null, cls = "") => html`<span class="cell ${cls}">${n ? icon(n) : ""}</span>`;
    return html`<section class="panel">
      <div class="tabs">
        <div class="tab"><button aria-label="Schließen">${icon("close")}</button><span class="swatch"></span>Komp 1<button class="menu" aria-label="Menü">${icon("burger")}</button></div>
        <button class="tab idle">Renderliste</button>
      </div>
      <div class="main">
        <div class="left">
          <div class="top">
            <button class="clock"><b>0:00:00:00</b><small>00000 (60.00 fps)</small></button>
            <label class="find">${icon("searchMenu")}<input type="text" aria-label="Suchen"></label>
            <div class="tools">
              ${["miniFlow", "draft3d", "shy", "frames", "motion", "graph"].map((n, i) =>
                html`<button class=${classMap({ mid: i < 2, gap: i === 2, wide: i === 5 })} aria-label=${n}>${icon(n)}</button>`)}
            </div>
          </div>
          <div class="cols head">
            <div class="cells">${["eye", "speaker", "solo", "lockClosed"].map((n) => cell(n))}</div>
            <div class="tagcol">${icon("tag")}</div><div class="num">Nr.</div><div class="src">Quellenname</div>
            <div class="switches">${["mushroom", "sun", "quality", "fx", "film", "blur", "adjust", "cube"].map((n) => cell(n))}</div>
            <div class="parent">Übergeordnet</div><div></div>
          </div>
          ${this.layers.map((l) => html`<div class="cols row">
            <div class="cells">${cell("eye", "dark")}${cell(null)}${cell(null, "dark")}${cell(null, "dark")}</div>
            <div class="tagcol">${icon("twirl")}<span class="red"></span></div>
            <div class="num">${l.n}</div>
            <div class="src item">${l.text ? html`<span class="glyph">${icon("textLayer")}</span>` : html`<span class="white"></span>`}${l.name}</div>
            <div class="switches">
              ${l.sw.map((s) => cell(s, s === null ? "" : s === "sun" ? "dim" : "dark"))}${cell(null)}
              ${[0, 1, 2].map(() => cell(null, "dark"))}
            </div>
            <div class="parent item">${icon("whip")}<span class="combo"><select aria-label="Übergeordnet"><option>Ohne</option></select>${icon("drop")}</span></div>
            <div></div>
          </div>`)}
          <div class="space"></div>
          <div class="foot">
            ${["toggleA", "toggleB", "toggleC"].map((n) => html`<button aria-label=${n}>${icon(n)}</button>`)}
            <button class="toggle">Schalter/Modi aktivieren/deaktivieren</button>
          </div>
        </div>
        <div class="right">
          <div class="nav"><div class="range"><span class="knob"></span><span class="knob"></span></div></div>
          <div class="ruler"><div class="marks">
            ${[":00f", "00:30f", "01:00f", "01:30f", "02:00f", "02:30f"].map((t) => html`<span class="mark">${t}<i></i></span>`)}
          </div></div>
          <div class="work"><span class="start"></span><div class="area"></div><span class="end">${icon("marker")}</span></div>
          <div class="tracks">
            <div class="lanes">${this.layers.map(() => html`<div class="bar"></div>`)}</div>
            <div class="side"><div>${icon("comp")}</div></div>
          </div>
          <div class="foot">${icon("hillSmall")}<input class="slider" type="range" value="70" aria-label="Zoom">${icon("hillLarge")}<div class="hscroll"><div></div></div></div>
          <div class="line"></div><div class="playhead">${icon("head")}</div>
        </div>
      </div>
    </section>`;
  }
}

@customElement("app-root")
class AppRoot extends LitElement {
  static styles = css`
    :host { display: flex; flex-direction: column; height: 100vh; min-height: 480px; overflow: hidden; background: #1e1e1e; font: 11px/16px "Noto Sans", "DejaVu Sans Condensed", sans-serif; }
    .work { flex: 1; min-height: 0; display: grid; gap: 4px; padding-top: 4px; grid-template-columns: minmax(0, 361fr) minmax(0, 704fr) 207px; grid-template-rows: minmax(0, 1fr) 237px; }
    .wide { grid-column: 1 / 3; }
  `;
  render() {
    return html`
      <ae-menubar></ae-menubar>
      <ae-toolbar></ae-toolbar>
      <main class="work">
        <ae-effect-controls></ae-effect-controls>
        <ae-viewer></ae-viewer>
        <ae-side></ae-side>
        <ae-timeline class="wide"></ae-timeline>
        <ae-paragraph></ae-paragraph>
      </main>`;
  }
}
